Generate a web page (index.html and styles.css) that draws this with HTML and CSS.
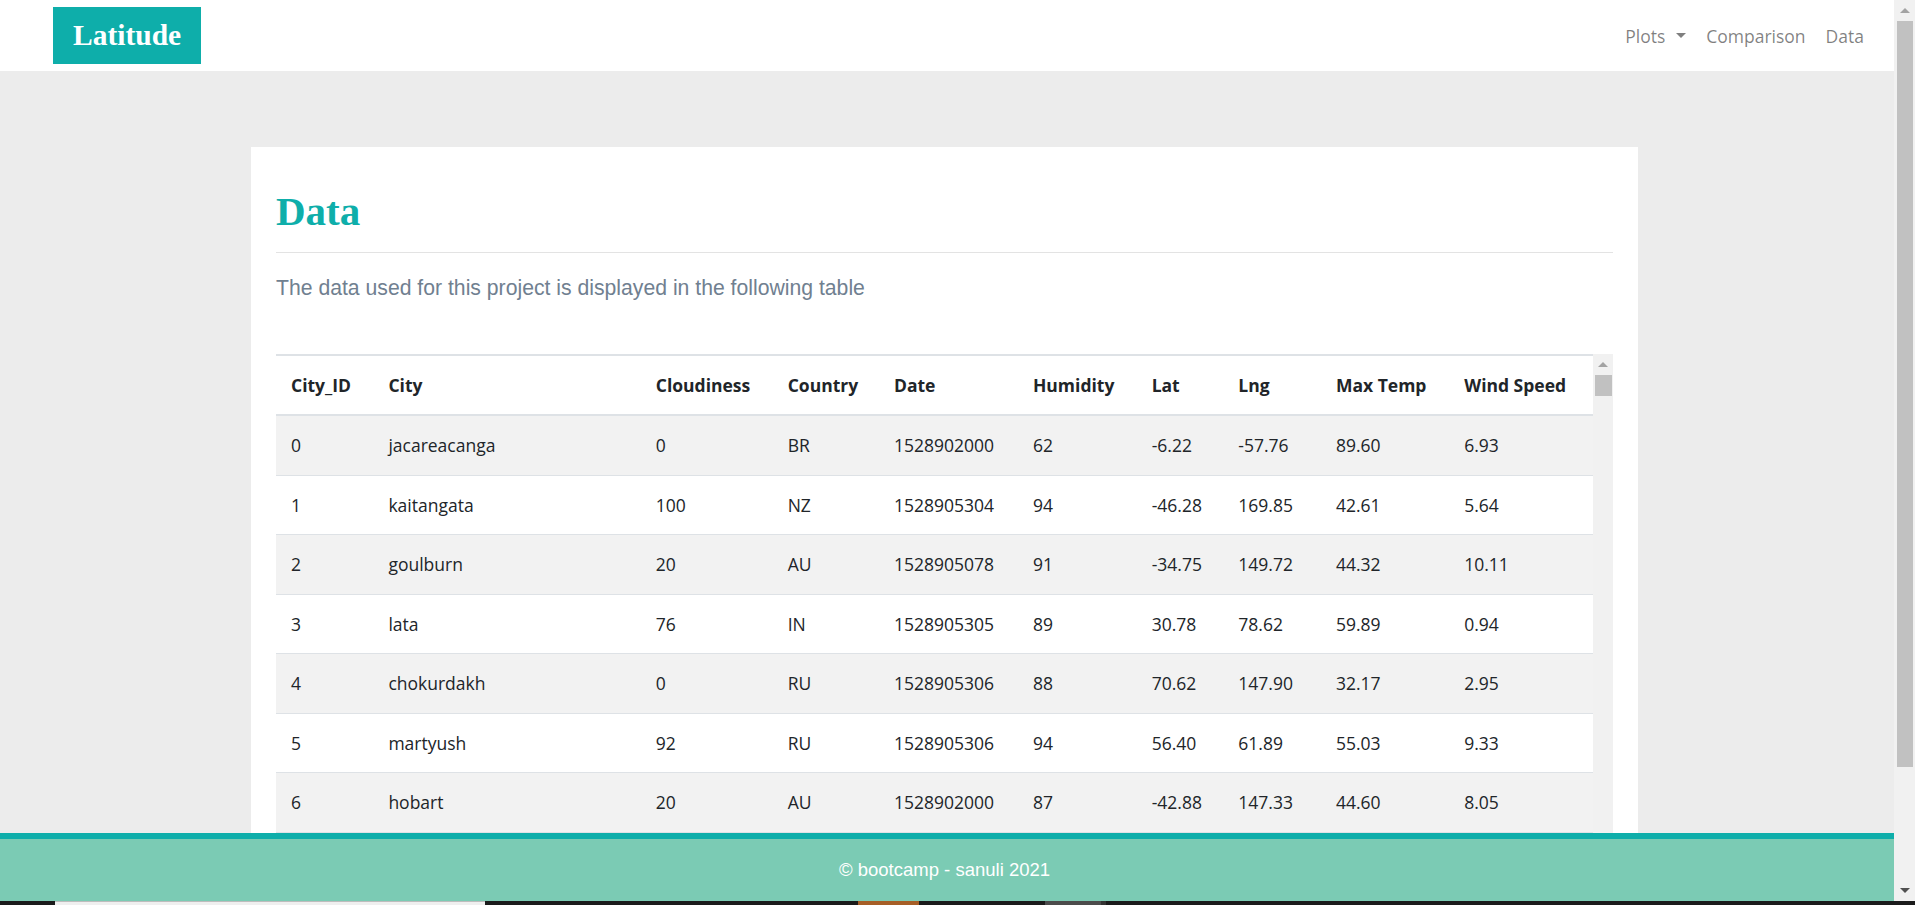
FILE: index.html
```html
<!DOCTYPE html>
<html lang="en">
<head>
<meta charset="utf-8">
<title>Latitude - Data</title>
<link rel="stylesheet" href="styles.css">
</head>
<body>
<div class="screen">
  <div class="window">
    <div class="page">
      <nav class="navbar">
        <a class="brand" href="#">Latitude</a>
        <ul class="nav">
          <li><a class="nav-link dropdown-toggle" href="#">Plots</a></li>
          <li><a class="nav-link" href="#">Comparison</a></li>
          <li><a class="nav-link" href="#">Data</a></li>
        </ul>
      </nav>
      <main class="main">
        <section class="card">
          <h1 class="title">Data</h1>
          <hr class="rule">
          <p class="lead">The data used for this project is displayed in the following table</p>
          <div class="table-wrap">
            <div class="table-area">
              <table class="data-table">
                <colgroup>
                  <col class="c-id"><col class="c-city"><col class="c-cloud"><col class="c-country"><col class="c-date">
                  <col class="c-hum"><col class="c-lat"><col class="c-lng"><col class="c-max"><col class="c-wind">
                </colgroup>
                <thead>
                  <tr><th>City_ID</th><th>City</th><th>Cloudiness</th><th>Country</th><th>Date</th><th>Humidity</th><th>Lat</th><th>Lng</th><th>Max Temp</th><th>Wind Speed</th></tr>
                </thead>
                <tbody>
                  <tr><td>0</td><td>jacareacanga</td><td>0</td><td>BR</td><td>1528902000</td><td>62</td><td>-6.22</td><td>-57.76</td><td>89.60</td><td>6.93</td></tr>
                  <tr><td>1</td><td>kaitangata</td><td>100</td><td>NZ</td><td>1528905304</td><td>94</td><td>-46.28</td><td>169.85</td><td>42.61</td><td>5.64</td></tr>
                  <tr><td>2</td><td>goulburn</td><td>20</td><td>AU</td><td>1528905078</td><td>91</td><td>-34.75</td><td>149.72</td><td>44.32</td><td>10.11</td></tr>
                  <tr><td>3</td><td>lata</td><td>76</td><td>IN</td><td>1528905305</td><td>89</td><td>30.78</td><td>78.62</td><td>59.89</td><td>0.94</td></tr>
                  <tr><td>4</td><td>chokurdakh</td><td>0</td><td>RU</td><td>1528905306</td><td>88</td><td>70.62</td><td>147.90</td><td>32.17</td><td>2.95</td></tr>
                  <tr><td>5</td><td>martyush</td><td>92</td><td>RU</td><td>1528905306</td><td>94</td><td>56.40</td><td>61.89</td><td>55.03</td><td>9.33</td></tr>
                  <tr><td>6</td><td>hobart</td><td>20</td><td>AU</td><td>1528902000</td><td>87</td><td>-42.88</td><td>147.33</td><td>44.60</td><td>8.05</td></tr>
                </tbody>
              </table>
            </div>
            <div class="vscroll table-scroll">
              <div class="sb-btn"><span class="arrow-up light"></span></div>
              <div class="sb-thumb small"></div>
            </div>
          </div>
        </section>
      </main>
      <footer class="footer">© bootcamp - sanuli 2021</footer>
    </div>
    <div class="vscroll page-scroll">
      <div class="sb-btn"><span class="arrow-up light"></span></div>
      <div class="sb-thumb big"></div>
      <div class="sb-space"></div>
      <div class="sb-btn"><span class="arrow-down dark"></span></div>
    </div>
  </div>
  <div class="taskbar">
    <span class="tb tb-a"></span><span class="tb tb-b"></span><span class="tb tb-c"></span><span class="tb tb-d"></span><span class="tb tb-e"></span><span class="tb tb-f"></span><span class="tb tb-g"></span><span class="tb tb-h"></span>
  </div>
</div>
</body>
</html>
```
FILE: styles.css
```css
html, body {
  margin: 0;
  height: 100%;
  overflow: hidden;
}
body {
  font-family: "Open Sans", "Noto Sans", sans-serif;
  color: #212529;
}
.screen {
  display: flex;
  flex-direction: column;
  height: 100vh;
}
.window {
  flex: 1;
  min-height: 0;
  display: flex;
}
.page {
  flex: 1;
  min-width: 0;
  display: flex;
  flex-direction: column;
  overflow: hidden;
}

/* navbar */
.navbar {
  flex: none;
  height: 71px;
  background: #fff;
  display: flex;
  align-items: center;
  justify-content: space-between;
  padding: 0 20px 0 53px;
}
.brand {
  box-sizing: border-box;
  width: 148px;
  height: 57px;
  padding: 0 20px;
  display: flex;
  align-items: center;
  background: #0eaeaa;
  color: #fff;
  font: bold 29.5px "Liberation Serif", "Times New Roman", serif;
  text-decoration: none;
}
.nav {
  display: flex;
  list-style: none;
  margin: 0;
  padding: 0;
}
.nav-link {
  display: block;
  padding: 0 10px;
  line-height: 30px;
  font-size: 17.5px;
  color: rgba(0, 0, 0, 0.5);
  text-decoration: none;
}
.dropdown-toggle::after {
  content: "";
  display: inline-block;
  margin-left: 11px;
  vertical-align: 0.25em;
  border-top: 5px solid;
  border-left: 5px solid transparent;
  border-right: 5px solid transparent;
}

/* main */
.main {
  flex: 1;
  min-height: 0;
  overflow: hidden;
  background: #ececec;
  display: flex;
  justify-content: center;
  align-items: flex-start;
  padding: 76px 5px 0 0;
}
.card {
  flex: none;
  box-sizing: border-box;
  width: 1387px;
  background: #fff;
  padding: 40px 25px 200px;
}
.title {
  margin: 0 0 17px;
  font: bold 41px/48px "Liberation Serif", "Times New Roman", serif;
  color: #0eaeaa;
}
.rule {
  border: 0;
  border-top: 1px solid #e3e3e3;
  margin: 0 0 20px;
}
.lead {
  margin: 0 0 51px;
  font: 21.2px/30px "Liberation Sans", Arial, sans-serif;
  color: #708090;
}

/* table */
.table-wrap {
  display: flex;
  align-items: stretch;
}
.table-area {
  flex: 1;
  min-width: 0;
  overflow: hidden;
}
.data-table {
  width: 100%;
  table-layout: fixed;
  border-collapse: collapse;
  font-size: 17.5px;
  color: #212529;
}
.c-id { width: 97.4px; }
.c-city { width: 267.4px; }
.c-cloud { width: 131.9px; }
.c-country { width: 106.3px; }
.c-date { width: 139px; }
.c-hum { width: 118.7px; }
.c-lat { width: 86.7px; }
.c-lng { width: 97.6px; }
.c-max { width: 128.3px; }
.data-table th {
  text-align: left;
  font-weight: 700;
  padding: 15px;
  line-height: 28px;
  border-top: 2px solid #dee2e6;
  border-bottom: 2px solid #dee2e6;
  white-space: nowrap;
}
.data-table td {
  padding: 15px;
  line-height: 28.5px;
  border-top: 1px solid #dee2e6;
  white-space: nowrap;
}
.data-table tbody tr:last-child td {
  border-bottom: 1px solid #dee2e6;
}
.data-table tbody tr:nth-child(odd) {
  background: #f2f2f2;
}

/* scrollbars */
.vscroll {
  flex: none;
  display: flex;
  flex-direction: column;
  background: #f1f1f1;
}
.table-scroll {
  width: 20px;
  padding-bottom: 120px;
}
.page-scroll {
  width: 21px;
}
.sb-btn {
  flex: none;
  height: 21px;
  display: flex;
  align-items: center;
  justify-content: center;
}
.arrow-up {
  width: 0;
  height: 0;
  border-left: 5px solid transparent;
  border-right: 5px solid transparent;
  border-bottom: 5px solid;
}
.arrow-down {
  width: 0;
  height: 0;
  border-left: 5px solid transparent;
  border-right: 5px solid transparent;
  border-top: 5px solid;
}
.light { color: #a3a3a3; }
.dark { color: #505050; }
.sb-thumb {
  flex: none;
  background: #c1c1c1;
}
.sb-thumb.small {
  height: 21px;
  margin: 0 1px 0 2px;
}
.sb-thumb.big {
  height: 746px;
  margin: 0 2px 0 3px;
}
.sb-space {
  flex: 1;
}

/* footer */
.footer {
  flex: none;
  height: 62px;
  border-top: 6px solid #0eaeaa;
  background: #7bcbb4;
  color: #fff;
  font: 18.5px "Liberation Sans", Arial, sans-serif;
  display: flex;
  align-items: center;
  justify-content: center;
  padding-right: 5px;
}

/* bottom strip */
.taskbar {
  flex: none;
  height: 4px;
  display: flex;
  background: #1b1b1b;
}
.tb { display: block; height: 4px; }
.tb-a { width: 55px; }
.tb-b { width: 430px; background: #efefef; box-shadow: inset 0 1px 0 #bdbdbd; }
.tb-c { width: 373px; }
.tb-d { width: 61px; background: #a65e26; }
.tb-e { width: 126px; }
.tb-f { width: 56px; background: #4b4b4b; }
.tb-g { width: 5px; background: #333; }
.tb-h { flex: 1; }
```
